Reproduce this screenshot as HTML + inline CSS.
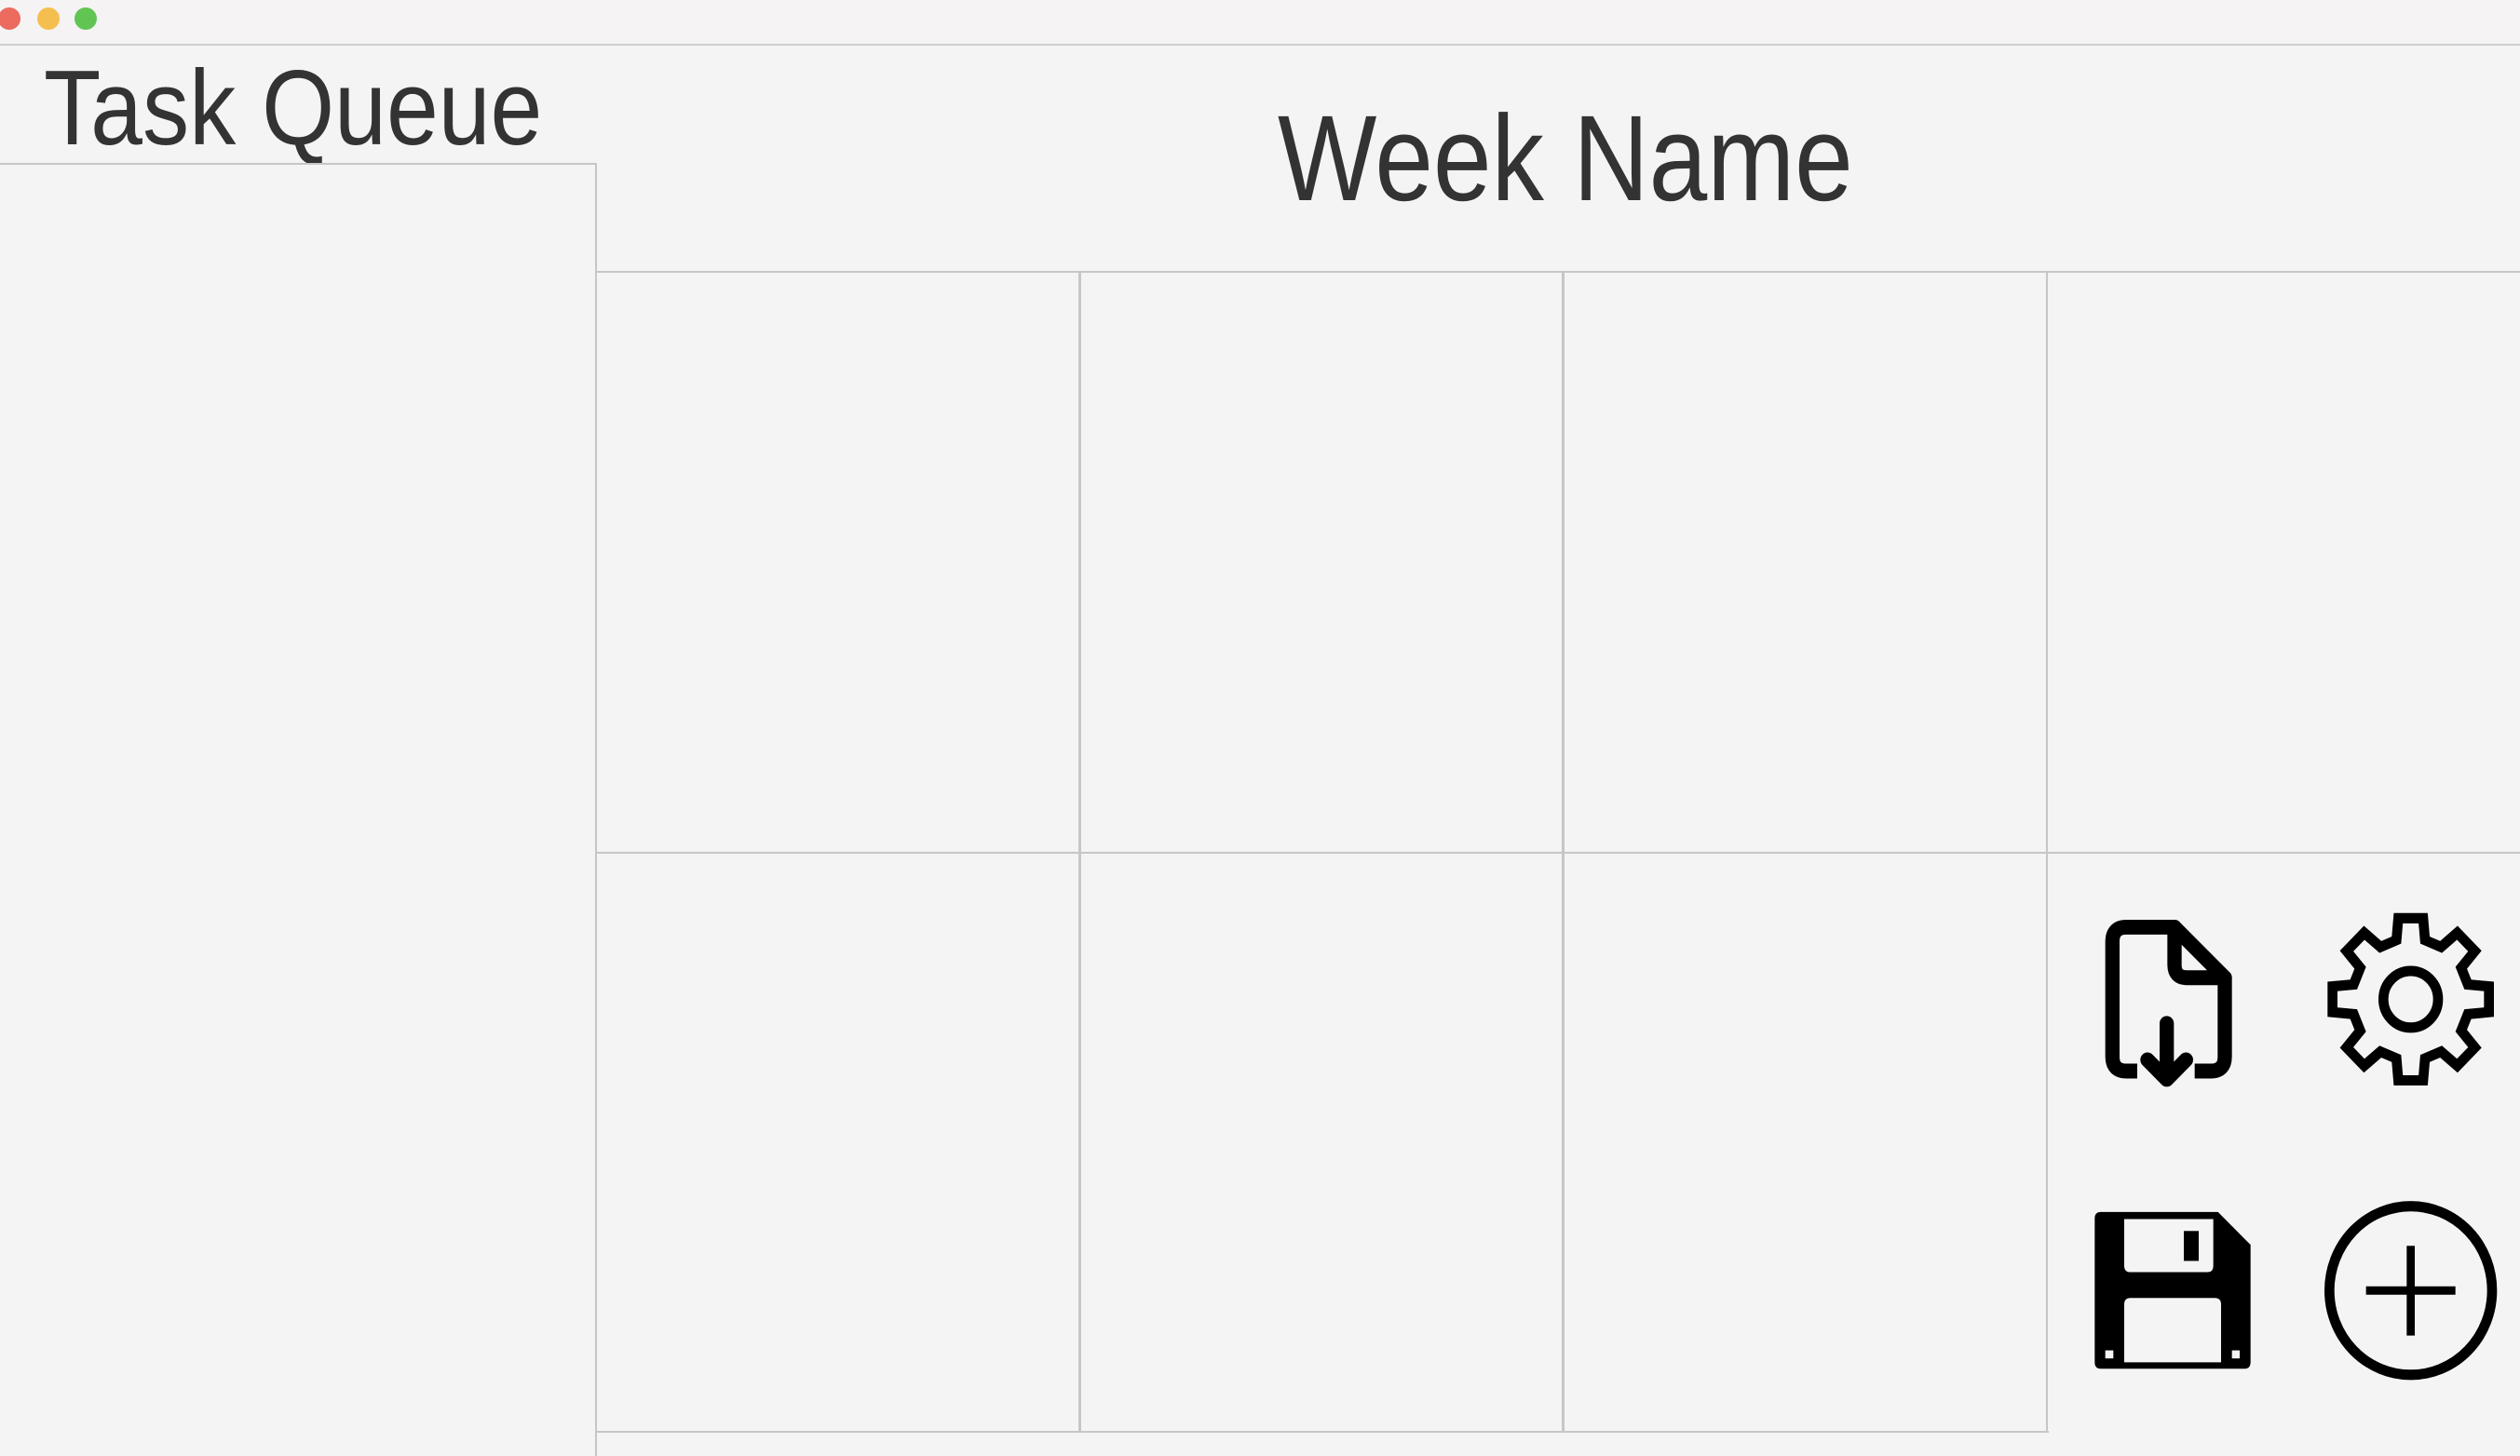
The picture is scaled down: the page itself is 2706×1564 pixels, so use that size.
<!DOCTYPE html>
<html><head><meta charset="utf-8"><style>
html,body{margin:0;padding:0}
body{width:2706px;height:1564px;background:#f4f4f4;position:relative;overflow:hidden;font-family:"Liberation Sans",sans-serif;color:#333}
.tb{position:absolute;left:0;top:0;width:2706px;height:47px;background:#f5f3f3;border-bottom:2px solid #cfcfcf}
.dot{position:absolute;top:8px;width:24px;height:24px;border-radius:50%}
.ln{position:absolute;background:#c6c6c6}
.t{position:absolute;white-space:nowrap;transform-origin:0 0;line-height:1}
</style></head><body>
<div class="tb"></div>
<div class="dot" style="left:-2px;background:#ec6a5e"></div>
<div class="dot" style="left:40px;background:#f5bf4f"></div>
<div class="dot" style="left:80px;background:#61c554"></div>

<div class="t" style="left:47px;top:60px;font-size:114px;transform:scaleX(0.88)">Task Queue</div>
<div class="t" style="left:1372px;top:104px;font-size:131px;transform:scaleX(0.86)">Week Name</div>

<!-- left panel -->
<div class="ln" style="left:0;top:175px;width:641px;height:2px"></div>
<div class="ln" style="left:639px;top:175px;width:2px;height:1389px"></div>
<!-- grid -->
<div class="ln" style="left:640px;top:291px;width:2066px;height:2px"></div>
<div class="ln" style="left:640px;top:915px;width:2066px;height:2px"></div>
<div class="ln" style="left:640px;top:1537px;width:1560px;height:2px"></div>
<div class="ln" style="left:1158px;top:292px;width:3px;height:1246px"></div>
<div class="ln" style="left:1677px;top:292px;width:3px;height:1246px"></div>
<div class="ln" style="left:2197px;top:292px;width:2px;height:1246px"></div>

<svg style="position:absolute;left:2200px;top:950px" width="506" height="560" viewBox="0 0 1518 1620" preserveAspectRatio="none">
<g fill="none" stroke="#000" stroke-width="46" stroke-linejoin="round" stroke-linecap="round">
<path d="M285 580 H250 Q205 580 205 535 V178 Q205 133 250 133 H405 L567 290 V535 Q567 580 522 580 H470" stroke-linecap="butt"/>
<path d="M405 133 V250 Q405 290 445 290 H567"/>
<path d="M380 432 V600 M318 545 L380 606 L442 545"/>
</g>
<g transform="translate(1166,357)" fill="none" stroke="#000" stroke-width="32" stroke-linejoin="miter">
<path d="M-46 -184 L-40 -252 L40 -252 L46 -184 L97.6 -162.6 L149.9 -206.5 L206.5 -149.9 L162.6 -97.6 L184 -46 L252 -40 L252 40 L184 46 L162.6 97.6 L206.5 149.9 L149.9 206.5 L97.6 162.6 L46 184 L40 252 L-40 252 L-46 184 L-97.6 162.6 L-149.9 206.5 L-206.5 149.9 L-162.6 97.6 L-184 46 L-252 40 L-252 -40 L-184 -46 L-162.6 -97.6 L-206.5 -149.9 L-149.9 -206.5 L-97.6 -162.6 Z"/>
<circle cx="0" cy="0" r="88"/>
</g>
<path d="M168 1018 H545 L650 1120 V1485 Q650 1505 630 1505 H168 Q148 1505 148 1485 V1038 Q148 1018 168 1018 Z" fill="#000"/>
<path d="M243 1040 H530 V1185 Q530 1205 510 1205 H263 Q243 1205 243 1185 Z" fill="#f4f4f4"/>
<rect x="435" y="1077" width="48" height="93" fill="#000"/>
<path d="M263 1285 H535 Q555 1285 555 1305 V1485 H243 V1305 Q243 1285 263 1285 Z" fill="#f4f4f4"/>
<rect x="182" y="1448" width="26" height="25" fill="#f4f4f4"/>
<rect x="590" y="1448" width="25" height="25" fill="#f4f4f4"/>
<g fill="none" stroke="#000">
<circle cx="1166" cy="1262" r="262" stroke-width="32"/>
<path d="M1022 1262 H1310 M1166 1123 V1402" stroke-width="26"/>
</g>
</svg>
</body></html>
